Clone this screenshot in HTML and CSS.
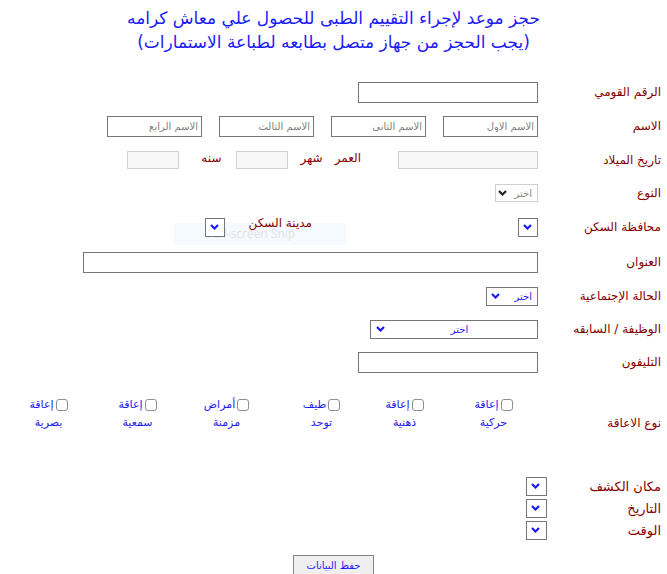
FILE: index.html
```html
<!DOCTYPE html>
<html lang="ar" dir="rtl">
<head>
<meta charset="utf-8">
<title>حجز موعد</title>
<link rel="stylesheet" href="styles.css">
</head>
<body>
<div class="snip">Full-screen Snip</div>
<h1 class="title">حجز موعد لإجراء التقييم الطبى للحصول علي معاش كرامه<br>(يجب الحجز من جهاز متصل بطابعه لطباعة الاستمارات)</h1>
<form class="form">
  <div class="row">
    <span class="lbl">الرقم القومي</span>
    <div class="field"><input class="txt w180" type="text"></div>
  </div>
  <div class="row">
    <span class="lbl">الاسم</span>
    <div class="field names">
      <input class="txt name" type="text" placeholder="الاسم الاول">
      <input class="txt name" type="text" placeholder="الاسم الثاني">
      <input class="txt name" type="text" placeholder="الاسم الثالث">
      <input class="txt name" type="text" placeholder="الاسم الرابع">
    </div>
  </div>
  <div class="row">
    <span class="lbl">تاريخ الميلاد</span>
    <div class="field">
      <input class="txt soft birth" type="text">
      <span class="unit age">العمر</span>
      <span class="unit month">شهر</span>
      <input class="txt soft small" type="text">
      <span class="unit year">سنه</span>
      <input class="txt soft small" type="text">
    </div>
  </div>
  <div class="row r32">
    <span class="lbl">النوع</span>
    <div class="field">
      <span class="sel"><select class="dis w43"><option>اختر</option></select><svg class="chev dark" viewBox="0 0 9 6"><path d="M1 1 L4.5 4.5 L8 1"/></svg></span>
    </div>
  </div>
  <div class="row r36">
    <span class="lbl">محافظة السكن</span>
    <div class="field">
      <span class="sel"><select class="w20"><option></option></select><svg class="chev" viewBox="0 0 9 6"><path d="M1 1 L4.5 4.5 L8 1"/></svg></span>
      <span class="unit city">مدينة السكن</span>
      <span class="sel"><select class="w20"><option></option></select><svg class="chev" viewBox="0 0 9 6"><path d="M1 1 L4.5 4.5 L8 1"/></svg></span>
    </div>
  </div>
  <div class="row">
    <span class="lbl">العنوان</span>
    <div class="field"><input class="txt w455" type="text"></div>
  </div>
  <div class="row">
    <span class="lbl">الحالة الإجتماعية</span>
    <div class="field">
      <span class="sel"><select class="w52"><option>اختر</option></select><svg class="chev" viewBox="0 0 9 6"><path d="M1 1 L4.5 4.5 L8 1"/></svg></span>
    </div>
  </div>
  <div class="row r32">
    <span class="lbl">الوظيفة / السابقه</span>
    <div class="field">
      <span class="sel"><select class="w168 center"><option>اختر</option></select><svg class="chev wide" viewBox="0 0 9 6"><path d="M1 1 L4.5 4.5 L8 1"/></svg></span>
    </div>
  </div>
  <div class="row">
    <span class="lbl">التليفون</span>
    <div class="field"><input class="txt w180" type="text"></div>
  </div>

  <div class="dis-row">
    <span class="lbl dis-lbl">نوع الاعاقة</span>
    <div class="groups">
      <label class="grp"><span class="l1"><input type="checkbox" class="cb">إعاقة</span><span class="l2">حركية</span></label>
      <label class="grp"><span class="l1"><input type="checkbox" class="cb">إعاقة</span><span class="l2">ذهنية</span></label>
      <label class="grp g3"><span class="l1"><input type="checkbox" class="cb">طيف</span><span class="l2">توحد</span></label>
      <label class="grp"><span class="l1"><input type="checkbox" class="cb">أمراض</span><span class="l2">مزمنة</span></label>
      <label class="grp"><span class="l1"><input type="checkbox" class="cb">إعاقة</span><span class="l2">سمعية</span></label>
      <label class="grp"><span class="l1"><input type="checkbox" class="cb">إعاقة</span><span class="l2">بصرية</span></label>
    </div>
  </div>

  <div class="loc">
    <div class="lrow">
      <span class="lbl llbl">مكان الكشف</span>
      <span class="sel"><select class="w21"><option></option></select><svg class="chev" viewBox="0 0 9 6"><path d="M1 1 L4.5 4.5 L8 1"/></svg></span>
    </div>
    <div class="lrow">
      <span class="lbl llbl">التاريخ</span>
      <span class="sel"><select class="w21"><option></option></select><svg class="chev" viewBox="0 0 9 6"><path d="M1 1 L4.5 4.5 L8 1"/></svg></span>
    </div>
    <div class="lrow">
      <span class="lbl llbl">الوقت</span>
      <span class="sel"><select class="w21"><option></option></select><svg class="chev" viewBox="0 0 9 6"><path d="M1 1 L4.5 4.5 L8 1"/></svg></span>
    </div>
  </div>

  <div class="actions"><button type="button" class="btn">حفظ البيانات</button></div>
</form>
</body>
</html>
```

FILE: styles.css
```css
html, body {
  margin: 0;
  padding: 0;
  background: #ffffff;
}
body {
  direction: rtl;
  font-family: "DejaVu Sans", sans-serif;
  position: relative;
  height: 574px;
  overflow: hidden;
}
.snip {
  position: absolute;
  left: 174px;
  top: 223px;
  width: 172px;
  height: 22px;
  box-sizing: border-box;
  padding-left: 33px;
  background: #f5faff;
  color: #e2e2e2;
  font: 12px/22px "Open Sans", sans-serif;
  text-align: left;
  direction: ltr;
  white-space: nowrap;
  z-index: 0;
}
.title {
  position: relative;
  margin: 6px 0 0;
  font-weight: normal;
  font-size: 17px;
  line-height: 24px;
  color: #1a1af5;
  text-align: center;
}
.form {
  position: relative;
  z-index: 1;
  margin: 21px 0 0;
}
.row {
  display: flex;
  align-items: center;
  height: 34px;
}
.row.r32 { height: 32px; }
.row.r36 { height: 36px; }
.lbl {
  flex: none;
  box-sizing: border-box;
  width: 129px;
  padding-right: 6px;
  color: #850000;
  font-size: 12px;
  white-space: nowrap;
}
.field {
  display: flex;
  align-items: center;
}
.txt {
  box-sizing: border-box;
  height: 21px;
  margin: 0;
  border: 1px solid #767676;
  border-radius: 0;
  background: #fff;
  padding: 1px 3px;
  font: 10px "DejaVu Sans", sans-serif;
  direction: rtl;
}
.txt::placeholder {
  color: #808080;
}
.w180 { width: 180px; }
.w455 { width: 455px; }
.names { gap: 17px; }
.name { width: 95px; }
.soft {
  height: 18px;
  border-color: #d0d0d0;
  background: #f8f8f8;
}
.birth { width: 140px; }
.small { width: 52px; }
.unit {
  color: #850000;
  font-size: 12px;
  white-space: nowrap;
  position: relative;
  top: -2px;
}
.age { margin-right: 37px; }
.month { margin-right: 12px; margin-left: 12px; }
.year { margin-right: 15px; margin-left: 22px; }
.city { margin-right: 206px; margin-left: 24px; top: -4px; }

.sel {
  position: relative;
  display: inline-flex;
}
.sel select {
  -webkit-appearance: none;
  appearance: none;
  box-sizing: border-box;
  height: 19px;
  margin: 0;
  border: 1px solid #767676;
  border-radius: 0;
  background: #fff;
  color: #1a1af5;
  font: 10px "DejaVu Sans", sans-serif;
  padding: 0 5px 0 16px;
  direction: rtl;
}
.sel select.w20 { width: 20px; padding: 0; }
.sel select.w21 { width: 21px; padding: 0; }
.sel select.w43 { width: 43px; height: 18px; }
.sel select.w52 { width: 52px; }
.sel select.w168 { width: 168px; }
.sel select.center { text-align-last: center; }
.sel select.dis {
  border-color: #cfcfcf;
  color: #8a8a8a;
}
.chev {
  position: absolute;
  left: 5px;
  top: 50%;
  width: 9px;
  height: 6px;
  margin-top: -3px;
  fill: none;
  stroke: #1a1af5;
  stroke-width: 2.2;
  pointer-events: none;
}
.chev.dark { stroke: #222; left: 3px; }
.chev.wide { left: 6px; }

.dis-row {
  display: flex;
  align-items: flex-end;
  margin-top: 17px;
}
.dis-lbl {
  line-height: 18px;
}
.groups {
  display: flex;
}
.grp {
  width: 89px;
  display: flex;
  flex-direction: column;
  align-items: center;
  color: #1a1af5;
  font-size: 11px;
  line-height: 18px;
}
.grp.g3 { padding-left: 12px; box-sizing: border-box; }
.l1 {
  display: flex;
  align-items: center;
  gap: 2px;
  white-space: nowrap;
}
.cb {
  -webkit-appearance: none;
  appearance: none;
  box-sizing: border-box;
  width: 12px;
  height: 12px;
  margin: 0;
  border: 1px solid #8f8f8f;
  border-radius: 3px;
  background: #fff;
}

.loc {
  margin-top: 43px;
}
.lrow {
  display: flex;
  align-items: center;
  height: 22px;
}
.llbl {
  width: 120px;
  font-size: 13px;
}

.actions {
  margin-top: 14px;
  display: flex;
  justify-content: center;
}
.btn {
  box-sizing: border-box;
  width: 81px;
  height: 21px;
  margin: 0;
  padding: 0;
  border: 1px solid #858585;
  border-radius: 0;
  background: #efefef;
  color: #1a1af5;
  font: 10px "DejaVu Sans", sans-serif;
}
```
